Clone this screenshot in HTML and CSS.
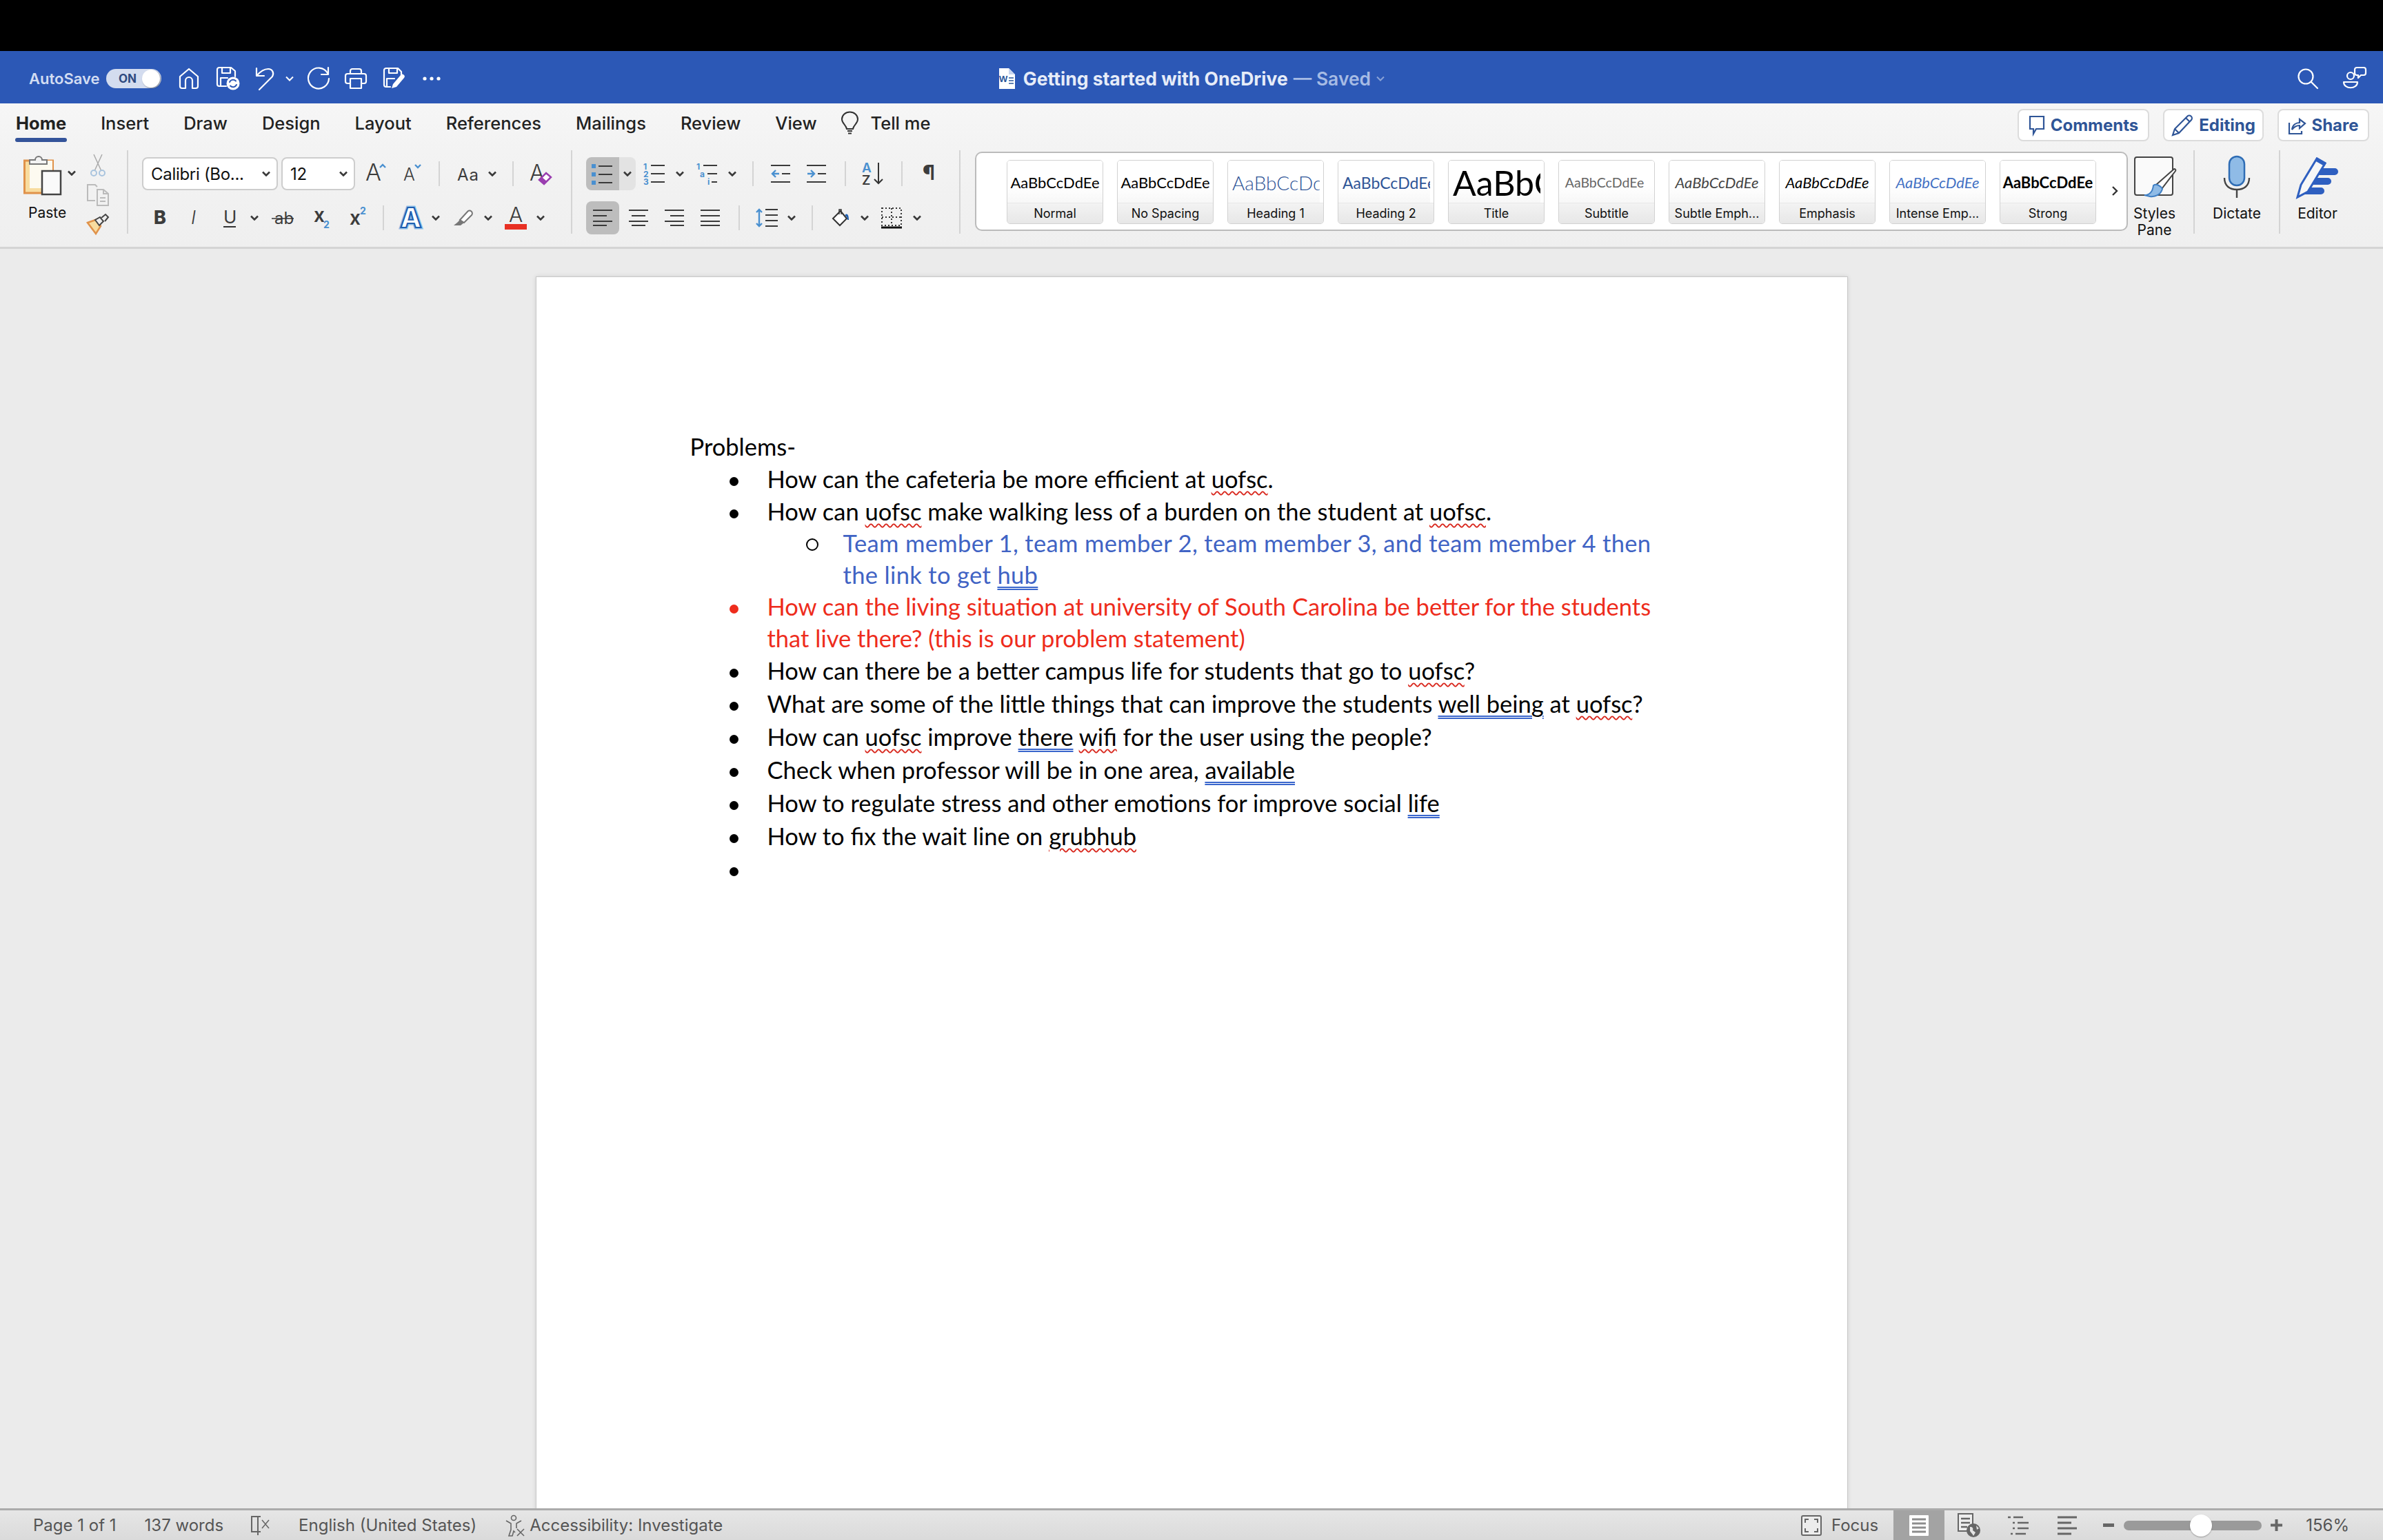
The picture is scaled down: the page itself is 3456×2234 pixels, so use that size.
FILE: index.html
```html
<!DOCTYPE html>
<html lang="en">
<head>
<meta charset="UTF-8" />
<title>Getting started with OneDrive</title>
<link rel="stylesheet" href="styles.css">
</head>
<body>

<svg class="defs">
  <symbol id="chev" viewBox="0 0 12 8"><path d="M1 1.5 6 6.5 11 1.5" fill="none" stroke="#3a3a3a" stroke-width="2.6"/></symbol>
  <symbol id="chevw" viewBox="0 0 12 8"><path d="M1 1.5 6 6.5 11 1.5" fill="none" stroke="#fff" stroke-width="2"/></symbol>
</svg>

<div class="topblack"></div>

<header class="titlebar">
  <div class="tb-left">
    <span class="autosave">AutoSave</span>
    <div class="toggle ml12"><span>ON</span><i></i></div>
    <svg class="ml26 wline" width="28" height="30" viewBox="0 0 28 30"><path d="M1 12 14 1 27 12V26a3 3 0 0 1-3 3H19V18a5 5 0 0 0-10 0V29H4a3 3 0 0 1-3-3Z"/></svg>
    <svg class="ml26 wline" width="32" height="34" viewBox="0 0 32 34"><path d="M4 1H21L27 6V14M1 4a3 3 0 0 1 3-3M1 4V25a3 3 0 0 0 3 3H14M8 1V9H20V1M6 28V16H16"/><circle class="wfill" cx="24" cy="24" r="9.5"/><path class="blueline" d="M19 22a5.500 5.500 0 0 1 9-1.500M29 26a5.500 5.500 0 0 1-9 1.500"/></svg>
    <svg class="ml24 wline" width="28" height="34" viewBox="0 0 28 34"><path d="M2 2V13H13M2 13C8 6 14 3 19 3 25 3 28 9 25 14L6 33"/></svg>
    <svg class="ml16" width="12" height="8"><use href="#chevw"/></svg>
    <svg class="ml20 wline" width="32" height="34" viewBox="0 0 32 34"><path d="M29 9A15 15 0 1 0 31 17M30 1V11H20"/></svg>
    <svg class="ml22 wline" width="32" height="30" viewBox="0 0 32 30"><path d="M8 8V4a3 3 0 0 1 3-3H21a3 3 0 0 1 3 3V8M8 22H4a3 3 0 0 1-3-3V11a3 3 0 0 1 3-3H28a3 3 0 0 1 3 3V19a3 3 0 0 1-3 3H24M8 15H24V29H8Z"/></svg>
    <svg class="ml24 wline" width="32" height="32" viewBox="0 0 32 32"><path d="M4 1H21L26 6V12M1 4a3 3 0 0 1 3-3M1 4V25a3 3 0 0 0 3 3H10M8 1V8H20V1M5 28V16H16"/><path class="wfill" d="M12 30 14 24 25 11a3 3 0 0 1 5 4L19 28Z"/></svg>
    <svg class="ml25" width="26" height="6" viewBox="0 0 26 6"><circle cx="3" cy="3" r="2.600" fill="#fff"/><circle cx="13" cy="3" r="2.600" fill="#fff"/><circle cx="23" cy="3" r="2.600" fill="#fff"/></svg>
  </div>
  <div class="tb-title">
    <svg width="24" height="30" viewBox="0 0 24 30"><path d="M1 0H15L24 9V30H1Z" fill="#fff"/><path d="M15 0 24 9H15Z" fill="#c9d6ef"/><text x="1" y="20" class="docw">W</text><path d="M15 14H22M15 18H22M15 22H22" stroke="#2b579a" stroke-width="1.500"/></svg>
    <span class="doc-name">Getting started with OneDrive</span>
    <span class="doc-saved">— Saved</span>
    <svg class="chev-faded" width="12" height="8"><use href="#chevw"/></svg>
  </div>
  <div class="tb-right">
    <svg class="wline" width="30" height="30" viewBox="0 0 30 30"><circle cx="12" cy="12" r="10.500"/><path d="M20 20 29 29"/></svg>
    <svg class="ml36 wline" width="34" height="34" viewBox="0 0 34 34"><circle cx="11" cy="13" r="5"/><path d="M1 22H21C21 33 1 33 1 22ZM20 1H30a3 3 0 0 1 3 3V9a3 3 0 0 1-3 3H26L22 16V12H20a3 3 0 0 1-3-3V4a3 3 0 0 1 3-3Z"/></svg>
  </div>
</header>

<nav class="tabs">
  <a class="tab active">Home</a>
  <a class="tab">Insert</a>
  <a class="tab">Draw</a>
  <a class="tab">Design</a>
  <a class="tab">Layout</a>
  <a class="tab">References</a>
  <a class="tab">Mailings</a>
  <a class="tab">Review</a>
  <a class="tab">View</a>
  <span class="tellme">
    <svg width="25" height="32" viewBox="0 0 25 32"><path class="dline" d="M8 24C7 18 1 16 1 10a11 10 0 0 1 23 0C24 16 18 18 17 24ZM9 27H16M10 30.500H15"/></svg>
    Tell me
  </span>
  <div class="tab-btns">
    <button class="tbtn tb-comments"><svg width="24" height="30" viewBox="0 0 24 30"><path class="bline" d="M2 2H22V20H11L7 27V20H2Z"/></svg>Comments</button>
    <button class="tbtn tb-editing"><svg width="32" height="32" viewBox="0 0 32 32"><path class="bline" d="M2 30 5 21 23 3a3.500 3.500 0 0 1 6 5L11 27ZM5 21 11 27M21 5 27 11"/></svg>Editing</button>
    <button class="tbtn tb-share"><svg width="26" height="28" viewBox="0 0 26 28"><path class="bline" d="M2 10V26H20V22M6 20C7 13 12 10 17 10V5L25 11 17 18V14C12 14 9 16 6 20Z"/></svg>Share</button>
  </div>
</nav>

<section class="ribbon">

  <div class="group g-clip">
    <div class="paste">
      <svg width="78" height="56" viewBox="0 0 78 56"><rect x="1.500" y="9" width="41" height="47" fill="#f8dc9f" stroke="#e0924a" stroke-width="3"/><rect x="9" y="9" width="33" height="40" fill="#fdfaf0"/><path d="M9 14V8H17a5 5 0 0 1 10 0H34V14Z" fill="#f3f3f3" stroke="#777" stroke-width="2"/><rect x="27" y="24" width="27" height="34" fill="#fafafa" stroke="#444" stroke-width="2.500"/><use href="#chev" x="64" y="23" width="12" height="8"/></svg>
      <span class="blabel">Paste</span>
    </div>
    <div class="clip-small">
      <svg width="22" height="32" viewBox="0 0 22 32"><path d="M5 0 16 24M17 0 6 24" stroke="#aaa" stroke-width="1.500"/><circle cx="5" cy="27" r="4" fill="none" stroke="#a9c4de" stroke-width="2"/><circle cx="17" cy="27" r="4" fill="none" stroke="#a9c4de" stroke-width="2"/></svg>
      <svg width="32" height="32" viewBox="0 0 32 32"><path d="M12 24H1V1H12L15 4M15 8H24L31 14V31H15ZM24 8V14H31M19 20H27M19 25H27" fill="none" stroke="#bbb" stroke-width="2"/></svg>
      <svg width="32" height="30" viewBox="0 0 32 30"><path d="M1 13 15 8 20 18 13 29Z" fill="#f8dc9f" stroke="#e0924a" stroke-width="2.500"/><path d="M12 9 18 17 24 11 19 5Z" fill="#eee" stroke="#444" stroke-width="2"/><path d="M21 6 27 1 31 5 26 11" fill="#eee" stroke="#444" stroke-width="2"/></svg>
    </div>
  </div>

  <div class="group g-font">
    <div class="row">
      <div class="select sel-font"><span>Calibri (Bo...</span><svg width="12" height="8"><use href="#chev"/></svg></div>
      <div class="select sel-size ml5"><span>12</span><svg width="12" height="8"><use href="#chev"/></svg></div>
      <svg class="ml15" width="30" height="32" viewBox="0 0 30 32"><text x="0" y="26" class="ia big-a">A</text><path d="M21 7 25 3 29 7" class="arrow-b"/></svg>
      <svg class="ml25" width="27" height="32" viewBox="0 0 27 32"><text x="0" y="26" class="ia mid-a">A</text><path d="M17 3 21 7 25 3" class="arrow-b"/></svg>
      <i class="sep ml24"></i>
      <svg class="ml25" width="32" height="28" viewBox="0 0 32 28"><text x="0" y="24" class="ia aa">Aa</text></svg>
      <svg class="ml13" width="12" height="8"><use href="#chev"/></svg>
      <i class="sep ml23"></i>
      <svg class="ml23" width="32" height="34" viewBox="0 0 32 34"><text x="0" y="27" class="ia clear-a">A</text><path d="M14 26 24 16 31 22 21 32Z" fill="#fff" stroke="#9a3eb0" stroke-width="2.500"/><path d="M14 26 18 22 25 28 21 32Z" fill="#9a3eb0"/></svg>
    </div>
    <div class="row">
      <svg class="ml17" width="15" height="26" viewBox="0 0 15 26"><text x="0" y="22" class="ia fb">B</text></svg>
      <svg class="ml38" width="14" height="26" viewBox="0 0 14 26"><text x="1" y="22" class="ia fi">I</text></svg>
      <svg class="ml34" width="18" height="28" viewBox="0 0 18 28"><text x="0" y="22" class="ia fu">U</text><path d="M0 27H18" stroke="#333" stroke-width="2"/></svg>
      <svg class="ml21" width="12" height="8"><use href="#chev"/></svg>
      <svg class="ml19" width="32" height="26" viewBox="0 0 32 26"><text x="4" y="22" class="ia fs">ab</text><path d="M0 14H32" stroke="#333" stroke-width="1.500"/></svg>
      <svg class="ml29" width="21" height="32" viewBox="0 0 21 32"><text x="0" y="22" class="ia fx">x</text><text x="14" y="31" class="ib">2</text></svg>
      <svg class="ml31" width="23" height="32" viewBox="0 0 23 32"><text x="0" y="26" class="ia fx">x</text><text x="15" y="11" class="ib">2</text></svg>
      <i class="sep ml25"></i>
      <svg class="ml23" width="32" height="32" viewBox="0 0 32 32"><text x="16" y="30" class="txfx txfx-o">A</text><text x="16" y="30" class="txfx">A</text></svg>
      <svg class="ml14" width="12" height="8"><use href="#chev"/></svg>
      <svg class="ml20" width="28" height="24" viewBox="0 0 28 24"><path d="M9 15 20 3a3 3 0 0 1 6 5L15 19Z" fill="#fff" stroke="#777" stroke-width="2"/><path d="M9 15 15 19 10 23H0L5 19Z" fill="#777"/></svg>
      <svg class="ml16" width="12" height="8"><use href="#chev"/></svg>
      <svg class="ml18" width="32" height="34" viewBox="0 0 32 34"><text x="16" y="23" class="ia color-a">A</text><rect y="26" width="32" height="8" fill="#e83023"/></svg>
      <svg class="ml14" width="12" height="8"><use href="#chev"/></svg>
    </div>
  </div>

  <div class="group g-para">
    <div class="row">
      <div class="splitbtn">
        <div class="on"><svg width="32" height="34" viewBox="0 0 32 34"><path class="sq" d="M0 0H6V6H0ZM0 12H6V18H0ZM0 24H6V30H0Z"/><path class="lines" d="M10 3H30M10 15H30M10 27H30"/></svg></div>
        <div class="drop"><svg width="12" height="8"><use href="#chev"/></svg></div>
      </div>
      <svg class="ml11" width="31" height="32" viewBox="0 0 31 32"><text x="0" y="10" class="ib num">1</text><text x="0" y="21" class="ib num">2</text><text x="0" y="32" class="ib num">3</text><path class="lines" d="M11 4H31M11 16H31M11 28H31"/></svg>
      <svg class="ml16" width="12" height="8"><use href="#chev"/></svg>
      <svg class="ml18" width="30" height="32" viewBox="0 0 30 32"><text x="0" y="10" class="ib num">1</text><text x="5" y="21" class="ib num">a</text><text x="16" y="32" class="ib num">i</text><path class="lines" d="M10 4H30M16 16H30M22 28H30"/></svg>
      <svg class="ml16" width="12" height="8"><use href="#chev"/></svg>
      <i class="sep ml23"></i>
      <svg class="ml25" width="28" height="28" viewBox="0 0 28 28"><path class="lines" d="M0 2H28M16 14H28M0 26H28"/><path class="barrow" d="M12 14H2M7 9 2 14 7 19"/></svg>
      <svg class="ml24" width="28" height="28" viewBox="0 0 28 28"><path class="lines" d="M0 2H28M16 14H28M0 26H28"/><path class="barrow" d="M1 14H11M6 9 11 14 6 19"/></svg>
      <i class="sep ml27"></i>
      <svg class="ml23" width="32" height="34" viewBox="0 0 32 34"><text x="0" y="15" class="ib az">A</text><text x="0" y="33" class="ia az">Z</text><path d="M24 1V31M18 25 24 31 30 25" fill="none" stroke="#333" stroke-width="2"/></svg>
      <i class="sep ml25"></i>
      <svg class="ml29" width="22" height="30" viewBox="0 0 22 30"><text x="0" y="24" class="ia pil">¶</text></svg>
    </div>
    <div class="row">
      <div class="onbtn"><svg width="28" height="26" viewBox="0 0 28 26"><path class="lines" d="M0 2H28M0 10H20M0 18H28M0 24H20"/></svg></div>
      <svg class="ml14" width="28" height="26" viewBox="0 0 28 26"><path class="lines" d="M0 2H28M4 10H24M0 18H28M4 24H24"/></svg>
      <svg class="ml24" width="28" height="26" viewBox="0 0 28 26"><path class="lines" d="M0 2H28M8 10H28M0 18H28M8 24H28"/></svg>
      <svg class="ml24" width="28" height="26" viewBox="0 0 28 26"><path class="lines" d="M0 2H28M0 10H28M0 18H28M0 24H28"/></svg>
      <i class="sep ml27"></i>
      <svg class="ml23" width="32" height="28" viewBox="0 0 32 28"><path class="lines" d="M14 2H32M14 10H32M14 18H32M14 26H32"/><path class="barrow" d="M5 2V26M1 6 5 2 9 6M1 22 5 26 9 22"/></svg>
      <svg class="ml14" width="12" height="8"><use href="#chev"/></svg>
      <i class="sep ml23"></i>
      <svg class="ml28" width="25" height="26" viewBox="0 0 25 26"><path d="M1 14 12 3 21 14 11 24Z" fill="#fff" stroke="#333" stroke-width="2"/><path d="M10 8V1h3V8" fill="none" stroke="#333" stroke-width="1.500"/><path d="M19 8c3-2 5 1 5 8h-2c0-3-1-5-3-6Z" fill="#1f5fb0"/></svg>
      <svg class="ml16" width="12" height="8"><use href="#chev"/></svg>
      <svg class="ml18" width="30" height="30" viewBox="0 0 30 30"><path d="M1 1H29V26H1ZM15 1V26M1 14H29" fill="none" stroke="#333" stroke-width="2" stroke-dasharray="2 3"/><path d="M0 29H30" stroke="#111" stroke-width="3"/></svg>
      <svg class="ml16" width="12" height="8"><use href="#chev"/></svg>
    </div>
  </div>

  <div class="gallery">
    <div class="card"><div class="sample s-normal">AaBbCcDdEe</div><div class="cap">Normal</div></div>
    <div class="card"><div class="sample s-normal">AaBbCcDdEe</div><div class="cap">No Spacing</div></div>
    <div class="card"><div class="sample s-h1">AaBbCcDdEe</div><div class="cap">Heading 1</div></div>
    <div class="card"><div class="sample s-h2">AaBbCcDdEe</div><div class="cap">Heading 2</div></div>
    <div class="card"><div class="sample s-title">AaBbCcDdEe</div><div class="cap">Title</div></div>
    <div class="card"><div class="sample s-subtitle">AaBbCcDdEe</div><div class="cap">Subtitle</div></div>
    <div class="card"><div class="sample s-subtle">AaBbCcDdEe</div><div class="cap">Subtle Emph...</div></div>
    <div class="card"><div class="sample s-emph">AaBbCcDdEe</div><div class="cap">Emphasis</div></div>
    <div class="card"><div class="sample s-intense">AaBbCcDdEe</div><div class="cap">Intense Emp...</div></div>
    <div class="card"><div class="sample s-strong">AaBbCcDdEe</div><div class="cap">Strong</div></div>
    <svg class="gal-arrow" width="10" height="14" viewBox="0 0 10 14"><path d="M2 1 8 7 2 13" fill="none" stroke="#333" stroke-width="2.400"/></svg>
  </div>

  <div class="bigtool t-styles">
    <svg width="62" height="62" viewBox="0 0 62 62"><rect x="2" y="2" width="55" height="55" rx="3" fill="#fafafa" stroke="#444" stroke-width="2"/><path d="M33 42 58 20c2-2 4 0 3 2L41 48Z" fill="#fff" stroke="#444" stroke-width="2"/><path d="M16 57c8 0 12-6 13-14 4-3 10 0 13 5-2 8-10 12-18 11Z" fill="#8fbbe6" stroke="#3f7fc4" stroke-width="2"/></svg>
    <span class="blabel">Styles<br>Pane</span>
  </div>
  <div class="bigtool t-dictate">
    <svg width="38" height="62" viewBox="0 0 38 62"><rect x="8" y="1" width="22" height="42" rx="11" fill="#8fbbe6" stroke="#2f6db5" stroke-width="2.500"/><path d="M1 32C1 44 9 49 19 49S37 44 37 32M19 49V61" fill="none" stroke="#444" stroke-width="2.400"/></svg>
    <span class="blabel">Dictate</span>
  </div>
  <div class="bigtool t-editor">
    <svg width="62" height="62" viewBox="0 0 62 62"><path d="M30 18H56a5 5 0 0 1 0 10H26ZM22 32H46a5 5 0 0 1 0 10H16ZM14 46H36a5 5 0 0 1 0 10H8Z" fill="#2e5fc0"/><path d="M2 60 7 42 30 4 42 11 17 52Z" fill="#f7f7f7" stroke="#2e5fc0" stroke-width="3"/><path d="M30 2 44 10 41 15 27 7Z" fill="#2e5fc0"/></svg>
    <span class="blabel">Editor</span>
  </div>
</section>

<main class="canvas">
  <div class="page">
    <p class="para">Problems-</p>
    <ul class="bullets">
      <li>How can the cafeteria be more efficient at <span class="sp">uofsc</span>.</li>
      <li>How can <span class="sp">uofsc</span> make walking less of a burden on the student at <span class="sp">uofsc</span>.
        <ul class="sub">
          <li>Team member 1, team member 2, team member 3, and team member 4 then<br>the link to get <span class="gr">hub</span></li>
        </ul>
      </li>
      <li class="red">How can the living situation at university of South Carolina be better for the students<br>that live there? (this is our problem statement)</li>
      <li>How can there be a better campus life for students that go to <span class="sp">uofsc</span>?</li>
      <li>What are some of the little things that can improve the students <span class="gr">well being</span> at <span class="sp">uofsc</span>?</li>
      <li>How can <span class="sp">uofsc</span> improve <span class="gr">there</span> <span class="sp">wifi</span> for the user using the people?</li>
      <li>Check when professor will be in one area, <span class="gr">available</span></li>
      <li>How to regulate stress and other emotions for improve social <span class="gr">life</span></li>
      <li>How to fix the wait line on <span class="sp">grubhub</span></li>
      <li></li>
    </ul>
  </div>
</main>

<footer class="status">
  <span>Page 1 of 1</span>
  <span class="ml41">137 words</span>
  <svg class="ml40" width="28" height="32" viewBox="0 0 28 32"><path d="M10 3H1V25H10M10 3V25M10 25V30M10 3H14M10 25H14" fill="none" stroke="#666" stroke-width="2"/><path d="M16 8 26 20M26 8 16 20" stroke="#666" stroke-width="1.500"/></svg>
  <span class="ml41">English (United States)</span>
  <svg class="ml42" width="32" height="32" viewBox="0 0 32 32"><circle cx="12" cy="5" r="3.500" fill="none" stroke="#666" stroke-width="1.600"/><path d="M1 9 8 13V22L5 31H10L12 24 14 26M23 9 16 13V20" fill="none" stroke="#666" stroke-width="1.600"/><path d="M17 21 27 31M27 21 17 31" stroke="#666" stroke-width="1.600"/></svg>
  <span class="ml3">Accessibility: Investigate</span>

  <div class="st-right">
    <svg width="30" height="30" viewBox="0 0 30 30"><rect x="1" y="1" width="28" height="28" rx="2" fill="#ececec" stroke="#666" stroke-width="2"/><path d="M6 11V6H11M19 6H24V11M24 19V24H19M11 24H6V19" fill="none" stroke="#666" stroke-width="2"/></svg>
    <span class="ml14">Focus</span>
    <div class="viewon ml22"><svg width="28" height="30" viewBox="0 0 28 30"><rect width="28" height="30" rx="1" fill="#fff"/><path d="M4 6H24M4 12H24M4 18H24M4 24H24" stroke="#8d8d8d" stroke-width="3"/></svg></div>
    <svg class="ml19" width="33" height="36" viewBox="0 0 33 36"><path d="M1 1H22V26H1Z" fill="#eee" stroke="#666" stroke-width="2"/><path d="M5 8H18M5 14H18M5 20H14" stroke="#666" stroke-width="2.500"/><circle cx="23" cy="25" r="10" fill="#666"/><path d="M18 20c4 0 5 2 4 5l4 3-3 5c-1-3-4-5-5-7ZM27 18l4 4-3 2Z" fill="#e4e4e4"/></svg>
    <svg class="ml40" width="30" height="28" viewBox="0 0 30 28"><path d="M0 2H4M8 2H22M7 10H10M14 10H30M7 18H10M14 18H30M4 26H7M11 26H26" stroke="#666" stroke-width="2.500"/></svg>
    <svg class="ml42" width="28" height="28" viewBox="0 0 28 28"><path d="M0 2H28M0 10H20M0 18H28M0 26H20" stroke="#666" stroke-width="3"/></svg>
    <i class="zoom-minus ml38"></i>
    <div class="slider ml14"><b></b></div>
    <svg class="ml13" width="17" height="17" viewBox="0 0 17 17"><path d="M0 8.500H17M8.500 0V17" stroke="#666" stroke-width="4"/></svg>
    <span class="ml34">156%</span>
  </div>
</footer>

</body>
</html>
```

FILE: styles.css
```css
* {
  box-sizing: border-box;
}
html, body {
  margin: 0;
  height: 100%;
}
body {
  display: flex;
  flex-direction: column;
  width: 3456px;
  height: 2234px;
  overflow: hidden;
  font-family: Inter, 'Noto Sans', sans-serif;
  background: #ebebeb;
  color: #222;
}
svg {
  display: block;
  flex: none;
  overflow: visible;
}
.defs {
  display: none;
}

/* spacing helpers */
.ml3 { margin-left: 3px; }
.ml5 { margin-left: 5px; }
.ml11 { margin-left: 11px; }
.ml12 { margin-left: 12px; }
.ml13 { margin-left: 13px; }
.ml14 { margin-left: 14px; }
.ml15 { margin-left: 15px; }
.ml16 { margin-left: 16px; }
.ml17 { margin-left: 17px; }
.ml18 { margin-left: 18px; }
.ml19 { margin-left: 19px; }
.ml20 { margin-left: 20px; }
.ml21 { margin-left: 21px; }
.ml22 { margin-left: 22px; }
.ml23 { margin-left: 23px; }
.ml24 { margin-left: 24px; }
.ml25 { margin-left: 25px; }
.ml26 { margin-left: 26px; }
.ml27 { margin-left: 27px; }
.ml28 { margin-left: 28px; }
.ml29 { margin-left: 29px; }
.ml31 { margin-left: 31px; }
.ml34 { margin-left: 34px; }
.ml36 { margin-left: 36px; }
.ml38 { margin-left: 38px; }
.ml40 { margin-left: 40px; }
.ml41 { margin-left: 41px; }
.ml42 { margin-left: 42px; }

.topblack {
  height: 74px;
  flex: none;
  background: #000;
}

/* title bar */
.titlebar {
  height: 76px;
  flex: none;
  display: grid;
  grid-template-columns: 1fr auto 1fr;
  align-items: center;
  padding-top: 3px;
  background: #2c58b6;
  color: #fff;
}
.tb-left, .tb-title, .tb-right {
  display: flex;
  align-items: center;
}
.tb-left {
  padding-left: 42px;
}
.tb-right {
  justify-content: flex-end;
  padding-right: 24px;
}
.autosave {
  width: 100px;
  font-size: 22px;
  font-weight: 600;
  color: #d3ddf2;
  white-space: nowrap;
}
.toggle {
  position: relative;
  width: 80px;
  height: 28px;
  border-radius: 14px;
  background: #d3dcef;
  color: #2e4a80;
  font-size: 17px;
  font-weight: 700;
  line-height: 28px;
  padding-left: 18px;
}
.toggle i {
  position: absolute;
  right: 2px;
  top: 1px;
  width: 26px;
  height: 26px;
  border-radius: 50%;
  background: #fff;
  box-shadow: 1px 1px 2px rgba(0,0,0,0.4);
}
.wline path, .wline circle {
  fill: none;
  stroke: #fff;
  stroke-width: 2.200;
  stroke-linejoin: round;
  stroke-linecap: round;
}
.wline .wfill {
  fill: #fff;
  stroke: none;
}
.wline .blueline {
  stroke: #2c58b6;
  stroke-width: 2;
}
.tb-title {
  font-size: 26.500px;
  font-weight: 700;
}
.tb-title svg:first-child {
  margin-right: 12px;
}
.docw {
  font-family: 'Liberation Sans', sans-serif;
  font-size: 13px;
  fill: #2b579a;
}
.doc-name {
  color: #e6ecf8;
}
.doc-saved {
  margin-left: 8px;
  font-weight: 600;
  color: #a6bbe4;
}
.chev-faded {
  margin-left: 8px;
  opacity: 0.45;
}

/* tabs */
.tabs {
  height: 68px;
  flex: none;
  display: flex;
  align-items: flex-start;
  padding-left: 23px;
  gap: 50px;
  background: linear-gradient(#f6f6f6, #f3f3f3);
  font-size: 25.500px;
  font-weight: 500;
}
.tab {
  position: relative;
  padding-top: 13px;
  line-height: 32px;
}
.tab.active {
  font-weight: 700;
}
.tab.active::after {
  content: "";
  position: absolute;
  left: -1px;
  right: -1px;
  top: 50px;
  height: 6px;
  border-radius: 3px;
  background: #34549a;
}
.tellme {
  display: flex;
  align-items: center;
  gap: 18px;
  margin-left: -15px;
  padding-top: 13px;
  line-height: 32px;
}
.dline {
  fill: none;
  stroke: #333;
  stroke-width: 2;
}
.tab-btns {
  display: flex;
  gap: 20px;
  margin-left: auto;
  padding: 8px 20px 0 0;
}
.tbtn {
  display: flex;
  align-items: center;
  justify-content: center;
  gap: 8px;
  height: 47px;
  padding: 0;
  border: 2px solid #dcdcdc;
  border-radius: 8px;
  background: #fff;
  color: #2f5597;
  font-family: inherit;
  font-size: 24px;
  font-weight: 700;
}
.tb-comments { width: 191px; }
.tb-editing { width: 146px; }
.tb-share { width: 133px; }
.bline {
  fill: none;
  stroke: #2f5597;
  stroke-width: 2.200;
}

/* ribbon */
.ribbon {
  height: 143px;
  flex: none;
  display: flex;
  padding-bottom: 19px;
  background: linear-gradient(#f3f3f3, #efefef);
  border-bottom: 3px solid #d4d4d4;
}
.group {
  display: flex;
  flex-direction: column;
  gap: 16px;
  padding: 10px 0 0 20px;
  border-right: 2px solid #d4d4d4;
}
.g-clip {
  flex-direction: row;
  gap: 0;
  width: 186px;
  padding-left: 34px;
  padding-top: 6px;
}
.paste {
  width: 92px;
  display: flex;
  flex-direction: column;
  align-items: flex-start;
}
.paste .blabel {
  width: 54px;
  margin-top: 17px;
  margin-left: 7px;
}
.clip-small {
  display: flex;
  flex-direction: column;
  align-items: center;
  gap: 11px;
  width: 32px;
}
.g-font {
  width: 644px;
}
.g-para {
  width: 563px;
}
.row {
  display: flex;
  align-items: center;
  height: 48px;
}
.select {
  display: flex;
  align-items: center;
  justify-content: space-between;
  height: 48px;
  padding: 0 9px 0 11px;
  border: 2px solid #cdcdcd;
  border-radius: 8px;
  background: #fff;
  color: #111;
  font-size: 24px;
  letter-spacing: -0.3px;
}
.sel-font {
  width: 197px;
}
.sel-size {
  width: 107px;
}
.sep {
  display: block;
  width: 2px;
  height: 36px;
  flex: none;
  background: #d4d4d4;
}
.ia {
  fill: #3c3c3c;
  font-family: Inter, sans-serif;
}
.ib {
  fill: #4a90d0;
  font-family: Inter, sans-serif;
  font-size: 14px;
  font-weight: 700;
}
.big-a { font-size: 34px; font-weight: 300; }
.mid-a { font-size: 25px; font-weight: 300; }
.clear-a { font-size: 32px; font-weight: 300; }
.color-a { font-size: 30px; font-weight: 300; text-anchor: middle; }
.aa { font-size: 24px; letter-spacing: 1px; }
.fb { font-size: 27px; font-weight: 800; }
.fi { font-size: 27px; font-style: italic; font-weight: 300; }
.fu { font-size: 26px; }
.fs { font-size: 24px; }
.fx { font-size: 28px; font-weight: 600; }
.num { font-size: 12px; }
.az { font-size: 19px; font-weight: 600; }
.pil { font-size: 30px; font-weight: 700; }
.arrow-b {
  fill: none;
  stroke: #4a90d0;
  stroke-width: 2.400;
}
.txfx {
  font-family: Inter, sans-serif;
  font-size: 40px;
  font-weight: 800;
  text-anchor: middle;
  fill: #fff;
  stroke: #1f5fb0;
  stroke-width: 2.200;
}
.txfx-o {
  stroke: #8fbfe8;
  stroke-width: 5;
}
.lines {
  fill: none;
  stroke: #3a3a3a;
  stroke-width: 2;
}
.sq {
  fill: #4a90d0;
}
.barrow {
  fill: none;
  stroke: #4a90d0;
  stroke-width: 2.400;
}
.splitbtn {
  display: flex;
  width: 72px;
  height: 48px;
  border-radius: 8px;
  overflow: hidden;
}
.splitbtn .on {
  width: 48px;
  display: flex;
  align-items: center;
  padding: 6px 0 0 8px;
  background: #bdbdbd;
}
.splitbtn .drop {
  width: 24px;
  display: flex;
  align-items: center;
  justify-content: center;
  background: #e3e3e3;
}
.onbtn {
  width: 48px;
  height: 48px;
  display: flex;
  align-items: center;
  justify-content: center;
  border-radius: 8px;
  background: #bdbdbd;
}

/* style gallery */
.gallery {
  width: 1672px;
  height: 115px;
  flex: none;
  display: flex;
  gap: 20px;
  margin: 2px 0 0 21px;
  padding: 10px 0 0 44px;
  border: 2px solid #bbb;
  border-radius: 10px;
  background: #fff;
}
.card {
  width: 140px;
  height: 93px;
  flex: none;
  overflow: hidden;
  border: 1px solid #d2d2d2;
  border-radius: 5px;
  font-family: Lato, sans-serif;
}
.sample {
  height: 61px;
  padding-top: 16px;
  overflow: hidden;
  white-space: nowrap;
  text-align: center;
  font-size: 22px;
  line-height: 32px;
  color: #000;
  background: linear-gradient(#fff 60%, #f7f7f7);
}
.s-h1, .s-h2, .s-title {
  padding-left: 6px;
  border-right: 5px solid #fff;
  text-align: left;
}
.s-h1 { font-size: 28px; font-weight: 300; color: #2f5597; }
.s-h2 { font-size: 23px; color: #2f5597; }
.s-title { padding-top: 6px; font-size: 50px; font-weight: 400; line-height: 52px; }
.s-subtitle { padding-right: 6px; font-size: 19.500px; color: #666; }
.s-subtle { font-style: italic; color: #444; }
.s-emph { font-style: italic; }
.s-intense { font-style: italic; color: #4472c4; }
.s-strong { font-weight: 700; }
.cap {
  height: 30px;
  line-height: 30px;
  text-align: center;
  white-space: nowrap;
  overflow: hidden;
  font-family: Inter, sans-serif;
  font-size: 18px;
  color: #111;
  background: linear-gradient(#f3f3f3, #e7e7e7);
  border-top: 1px solid #e8e8e8;
}
.gal-arrow {
  margin: 38px 0 0 2px;
}

.bigtool {
  display: flex;
  flex-direction: column;
  align-items: center;
  padding-top: 8px;
  border-right: 2px solid #d4d4d4;
}
.blabel {
  font-size: 21px;
  line-height: 24px;
  text-align: center;
  color: #111;
}
.bigtool .blabel {
  margin-top: 10px;
}
.t-styles {
  width: 97px;
  padding-right: 18px;
}
.t-dictate {
  width: 124px;
}
.t-editor {
  width: 108px;
  border-right: 0;
}

/* document */
.canvas {
  flex: 1;
  min-height: 0;
  overflow: hidden;
  padding-top: 40px;
  background: #ebebeb;
}
.page {
  width: 1903px;
  height: 1900px;
  margin: 0 auto;
  padding: 222px 223px 0;
  background: #fff;
  border: 1px solid #c8c8c8;
  box-shadow: 0 0 6px rgba(0,0,0,0.12);
  font-family: Lato, 'Open Sans', sans-serif;
  font-size: 34.500px;
  line-height: 47.100px;
  color: #000;
}
.para {
  margin: 0;
}
.bullets, .sub {
  margin: 0;
  padding: 0;
  list-style: none;
}
.bullets > li {
  padding-left: 112px;
}
.bullets > li::before {
  content: "";
  display: inline-block;
  width: 13px;
  height: 13px;
  margin-left: -55px;
  margin-right: 42px;
  border-radius: 50%;
  background: currentColor;
  vertical-align: 3px;
}
.bullets > .red ~ li {
  line-height: 48px;
}
.sub {
  color: #4063c4;
  line-height: 46px;
  letter-spacing: 0.35px;
}
.sub > li {
  padding-left: 110px;
}
.sub > li::before {
  content: "";
  display: inline-block;
  width: 14px;
  height: 14px;
  margin-left: -54px;
  margin-right: 36px;
  border: 2px solid #000;
  border-radius: 50%;
  vertical-align: 2px;
}
.bullets > .red {
  color: #ee2c1c;
  line-height: 46px;
}
.sp {
  text-decoration: underline wavy #d9281e 2px;
  text-underline-offset: 4px;
}
.gr {
  text-decoration: underline double #3a66cc 2px;
  text-underline-offset: 4px;
}

/* status bar */
.status {
  height: 46px;
  flex: none;
  display: flex;
  align-items: center;
  padding-left: 48px;
  background: linear-gradient(#e6e6e6, #dadada);
  border-top: 3px solid #ababab;
  color: #555;
  font-size: 24px;
}
.st-right {
  display: flex;
  align-items: center;
  height: 100%;
  margin-left: auto;
  padding-right: 49px;
}
.viewon {
  display: flex;
  align-items: center;
  justify-content: center;
  width: 74px;
  height: 100%;
  background: #a3a3a3;
}
.zoom-minus {
  display: block;
  width: 16px;
  height: 5px;
  background: #666;
}
.slider {
  position: relative;
  width: 200px;
  height: 14px;
  border-radius: 7px;
  background: #9a9a9a;
}
.slider b {
  position: absolute;
  left: 96px;
  top: -9px;
  width: 32px;
  height: 32px;
  border-radius: 50%;
  background: #fff;
  box-shadow: 0 1px 2px rgba(0,0,0,0.3);
}
```
